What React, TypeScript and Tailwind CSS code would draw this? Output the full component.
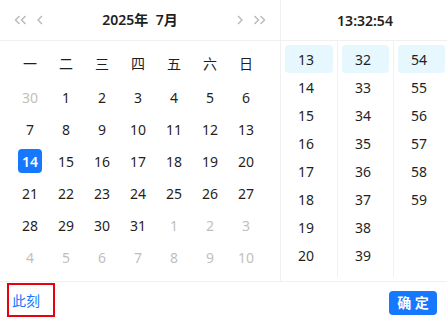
import React from "react";

const weekdays = ["一", "二", "三", "四", "五", "六", "日"];

type Cell = { d: number; cur: boolean };

const rows: Cell[][] = (() => {
  const cells: Cell[] = [{ d: 30, cur: false }];
  for (let i = 1; i <= 31; i++) cells.push({ d: i, cur: true });
  for (let i = 1; i <= 10; i++) cells.push({ d: i, cur: false });
  const r: Cell[][] = [];
  for (let i = 0; i < 6; i++) r.push(cells.slice(i * 7, i * 7 + 7));
  return r;
})();

const hours = [13, 14, 15, 16, 17, 18, 19, 20];
const minutes = [32, 33, 34, 35, 36, 37, 38, 39];
const seconds = [54, 55, 56, 57, 58, 59];

function DoubleLeft() {
  return (
    <svg width="13" height="10" viewBox="0 0 13 10" fill="none" stroke="#b8b8b8" strokeWidth="1.4">
      <path d="M5.5 1 L1.5 5 L5.5 9" />
      <path d="M11.5 1 L7.5 5 L11.5 9" />
    </svg>
  );
}
function DoubleRight() {
  return (
    <svg width="13" height="10" viewBox="0 0 13 10" fill="none" stroke="#b8b8b8" strokeWidth="1.4">
      <path d="M1.5 1 L5.5 5 L1.5 9" />
      <path d="M7.5 1 L11.5 5 L7.5 9" />
    </svg>
  );
}
function Left() {
  return (
    <svg width="6" height="10" viewBox="0 0 6 10" fill="none" stroke="#b8b8b8" strokeWidth="1.4">
      <path d="M5 1 L1 5 L5 9" />
    </svg>
  );
}
function Right() {
  return (
    <svg width="6" height="10" viewBox="0 0 6 10" fill="none" stroke="#b8b8b8" strokeWidth="1.4">
      <path d="M1 1 L5 5 L1 9" />
    </svg>
  );
}

function TimeColumn({ items, selected, first }: { items: number[]; selected: number; first?: boolean }) {
  return (
    <div className={`w-[56px] flex flex-col pt-1 ${first ? "" : "border-l border-[#f0f0f0]"}`}>
      {items.map((n) => (
        <div
          key={n}
          className={`h-7 mx-1 rounded text-left pl-[13px] pt-[2px] leading-[26px] ${n === selected ? "bg-[#e6f8fe]" : ""}`}
        >
          {n}
        </div>
      ))}
    </div>
  );
}

export default function App() {
  return (
    <div className="w-[447px] h-[323px] overflow-hidden bg-white">
      <div
        className="w-[449px] bg-white text-[14px] text-[#1f1f1f]"
        style={{ fontFamily: '"Noto Sans", "Noto Sans CJK SC", sans-serif' }}
      >
        <div className="flex">
          {/* Date panel */}
          <div className="w-[281px] border-r border-[#f0f0f0] flex flex-col">
            <div className="h-[41px] border-b border-[#f0f0f0] flex items-center pl-[14px] pr-[14px]">
              <DoubleLeft />
              <span className="ml-[10px]">
                <Left />
              </span>
              <div className="flex-1 text-center font-semibold -mt-[2px]">2025年&nbsp; 7月</div>
              <Right />
              <span className="ml-[10px]">
                <DoubleRight />
              </span>
            </div>
            <div className="h-[240px] pt-1 pl-3">
              <div className="grid grid-cols-[repeat(7,36px)]">
                {weekdays.map((w) => (
                  <div key={w} className="h-9 flex items-center justify-center">
                    {w}
                  </div>
                ))}
              </div>
              {rows.map((r, i) => (
                <div key={i} className="grid grid-cols-[repeat(7,36px)]">
                  {r.map((c, j) => (
                    <div key={j} className="h-8 flex items-center justify-center">
                      {c.cur && c.d === 14 ? (
                        <span className="w-6 h-6 rounded bg-[#1677ff] text-white font-semibold flex items-center justify-center">
                          14
                        </span>
                      ) : (
                        <span className={c.cur ? "" : "text-[#bfbfbf]"}>{c.d}</span>
                      )}
                    </div>
                  ))}
                </div>
              ))}
            </div>
          </div>
          {/* Time panel */}
          <div className="w-[168px] flex flex-col">
            <div className="h-[41px] border-b border-[#f0f0f0] flex items-center justify-center font-semibold">
              13:32:54
            </div>
            <div className="h-[236px] flex">
              <TimeColumn items={hours} selected={13} first />
              <TimeColumn items={minutes} selected={32} />
              <TimeColumn items={seconds} selected={54} />
            </div>
          </div>
        </div>
        <div className="border-t border-[#f0f0f0] h-[41px] flex items-center justify-between pl-[7px] pr-3">
          <span className="w-[48px] h-[34px] border-2 border-[#e8000b] flex items-center pl-[3px] mt-[-4px] text-[#1677ff]">
            此刻
          </span>
          <button className="w-12 h-6 rounded bg-[#1677ff] text-white text-[14px] font-semibold leading-6 mt-[2px]">
            确 定
          </button>
        </div>
      </div>
    </div>
  );
}
